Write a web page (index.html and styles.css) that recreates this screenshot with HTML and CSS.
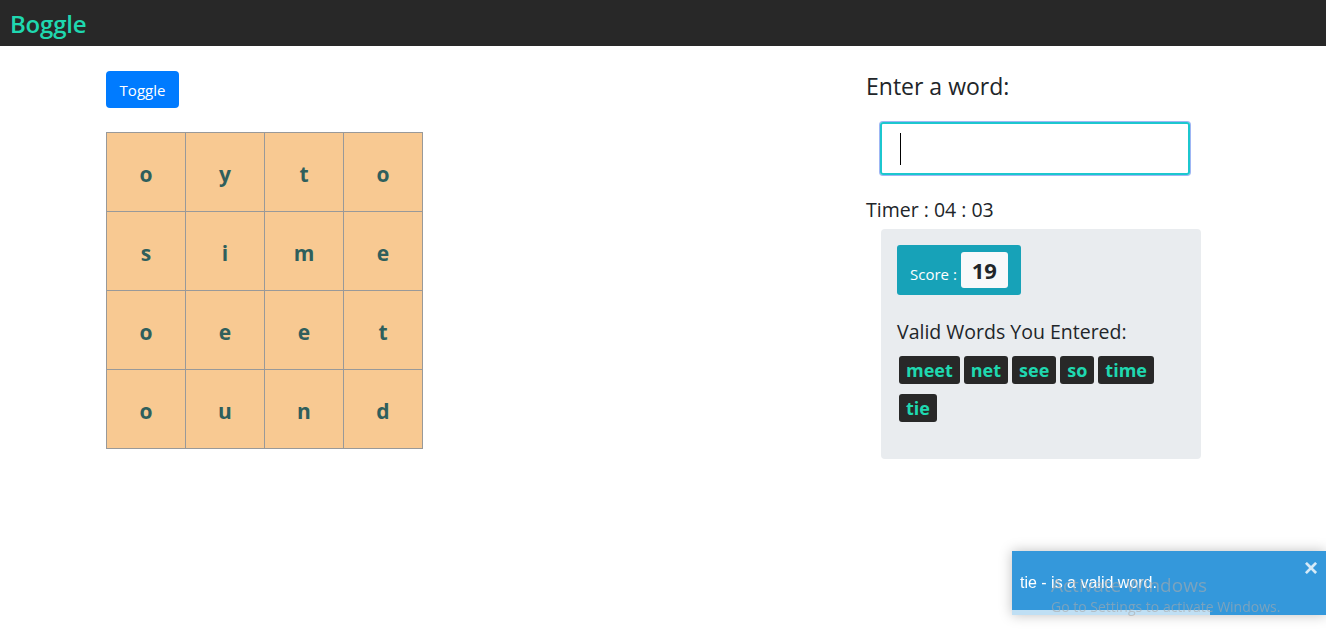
FILE: index.html
```html
<!DOCTYPE html>
<html>
<head>
<meta charset="utf-8">
<link rel="stylesheet" href="styles.css">
</head>
<body>
<nav class="navbar"><span class="brand">Boggle</span></nav>
<main class="main">
  <section class="left">
    <button class="toggle">Toggle</button>
    <div class="board">
      <div class="cell">o</div><div class="cell">y</div><div class="cell">t</div><div class="cell">o</div>
      <div class="cell">s</div><div class="cell">i</div><div class="cell">m</div><div class="cell">e</div>
      <div class="cell">o</div><div class="cell">e</div><div class="cell">e</div><div class="cell">t</div>
      <div class="cell">o</div><div class="cell">u</div><div class="cell">n</div><div class="cell">d</div>
    </div>
  </section>
  <section class="right">
    <h2 class="enter">Enter a word:</h2>
    <div class="input-wrap"><div class="word-input"><span class="caret"></span></div></div>
    <div class="timer">Timer : 04 : 03</div>
    <div class="panel">
      <div class="score">Score : <span class="score-num">19</span></div>
      <div class="valid-title">Valid Words You Entered:</div>
      <div class="words">
        <span class="word">meet</span><span class="word">net</span><span class="word">see</span><span class="word">so</span><span class="word">time</span><span class="word">tie</span>
      </div>
    </div>
  </section>
</main>
<div class="toast">
  <span class="toast-msg">tie - is a valid word.</span>
  <span class="toast-close">×</span>
  <div class="toast-progress"></div>
</div>
<div class="watermark">
  <div class="wm1">Activate Windows</div>
  <div class="wm2">Go to Settings to activate Windows.</div>
</div>
</body>
</html>
```
FILE: styles.css
```css
* { box-sizing: border-box; }
body {
  margin: 0;
  font-family: "Open Sans", "Noto Sans", sans-serif;
  color: #212529;
  background: #fff;
}
.navbar {
  height: 46px;
  background: #282828;
  display: flex;
  align-items: center;
  padding-left: 10px;
}
.brand {
  color: #1fd8b0;
  font-size: 24px;
  font-weight: 600;
  letter-spacing: -0.2px;
}
.main {
  display: flex;
  padding-left: 106px;
}
.left {
  width: 760px;
  padding-top: 25px;
}
.toggle {
  display: block;
  background: #007bff;
  color: #fff;
  border: none;
  border-radius: 4px;
  width: 73px;
  height: 37px;
  font-family: inherit;
  font-size: 15px;
  padding: 0;
}
.board {
  margin-top: 24px;
  display: grid;
  grid-template-columns: repeat(4, 79px);
  grid-auto-rows: 79px;
  width: 317px;
  border-top: 1px solid #999;
  border-left: 1px solid #999;
}
.cell {
  background: #f8c992;
  border-right: 1px solid #999;
  border-bottom: 1px solid #999;
  display: flex;
  align-items: center;
  justify-content: center;
  color: #2f5f5c;
  font-weight: 700;
  font-size: 21px;
  padding-top: 3px;
}
.right {
  width: 340px;
}
.enter {
  margin: 0;
  padding-top: 24px;
  font-size: 23px;
  font-weight: 500;
  line-height: 32px;
}
.input-wrap {
  padding: 20px 0 0 14px;
}
.word-input {
  width: 310px;
  height: 53px;
  border: 2px solid #1cc7cf;
  border-radius: 3px;
  box-shadow: 0 0 0 1px #9fb6f4;
  display: flex;
  align-items: center;
  padding-left: 18px;
}
.caret {
  width: 1px;
  height: 32px;
  background: #000;
}
.timer {
  margin-top: 23px;
  font-size: 19.5px;
  font-weight: 500;
  line-height: 24px;
}
.panel {
  margin: 7px 0 0 15px;
  width: 320px;
  height: 230px;
  background: #e9ecef;
  border-radius: 4px;
  padding: 16px 16px;
}
.score {
  display: inline-flex;
  align-items: center;
  background: #17a2b8;
  color: #fff;
  border-radius: 3px;
  height: 50px;
  padding: 8px 13px 0 13px;
  font-size: 15px;
}
.score-num {
  display: inline-flex;
  align-items: center;
  justify-content: center;
  background: #f8f9fa;
  color: #212529;
  font-weight: 700;
  font-size: 22px;
  width: 47px;
  height: 36px;
  border-radius: 3px;
  margin-left: 4px;
  margin-top: -8px;
}
.valid-title {
  margin-top: 24px;
  font-size: 19.5px;
  font-weight: 500;
  line-height: 26px;
}
.words {
  margin-top: 11px;
  display: flex;
  flex-wrap: wrap;
  gap: 10px 4px;
  padding-left: 2px;
  width: 275px;
}
.word {
  background: #282828;
  color: #1fd8b0;
  font-weight: 700;
  font-size: 18px;
  border-radius: 3px;
  height: 28px;
  line-height: 28px;
  padding: 0 7px;
}
.toast {
  position: fixed;
  left: 1012px;
  top: 551px;
  width: 314px;
  height: 64px;
  background: #3498db;
  color: #fff;
  font-family: "Liberation Sans", Arial, sans-serif;
  box-shadow: 0 0 12px rgba(0,0,0,0.25);
}
.toast-msg {
  position: absolute;
  left: 8px;
  top: 23px;
  font-size: 16px;
}
.toast-close {
  position: absolute;
  right: 8px;
  top: 3px;
  font-size: 24px;
  line-height: 28px;
  font-weight: 700;
  opacity: 0.8;
}
.toast-progress {
  position: absolute;
  left: 0;
  bottom: 0;
  width: 198px;
  height: 5px;
  background: #bfdff4;
}
.watermark {
  position: fixed;
  left: 1051px;
  top: 573px;
  color: rgba(170,170,170,0.6);
  font-family: "Open Sans", sans-serif;
  pointer-events: none;
}
.wm1 { font-size: 19px; line-height: 24px; }
.wm2 { font-size: 14px; line-height: 20px; }
```
